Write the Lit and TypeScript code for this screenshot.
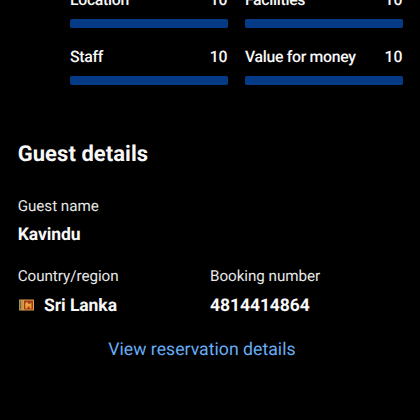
import { LitElement, html, css } from "lit";
import { customElement } from "lit/decorators.js";

const scores = [
  { label: "Location", value: 10 },
  { label: "Facilities", value: 10 },
  { label: "Staff", value: 10 },
  { label: "Value for money", value: 10 },
];

@customElement("app-root")
export class AppRoot extends LitElement {
  static styles = css`
    :host {
      display: flow-root;
      box-sizing: border-box;
      width: 420px;
      height: 420px;
      overflow: hidden;
      background: #000;
      color: #f8f8f8;
      font-family: Roboto, "Liberation Sans", sans-serif;
      white-space: nowrap;
      text-rendering: geometricPrecision;
    }
    .scores {
      display: grid;
      grid-template-columns: 157.6px 157.6px;
      column-gap: 17.4px;
      row-gap: 17px;
      margin: -12px 0 0 70px;
    }
    .line {
      display: flex;
      justify-content: space-between;
      align-items: baseline;
      font-size: 15.8px;
      font-weight: 500;
      line-height: 24px;
      letter-spacing: -0.3px;
    }
    .number {
      letter-spacing: 0;
    }
    .track {
      height: 9px;
      margin-top: 7px;
      border-radius: 2px;
      background: #1a1a1a;
    }
    .fill {
      height: 100%;
      border-radius: 2px;
      background: #053b86;
    }
    .guest {
      padding: 0 17.7px;
      margin-top: 55px;
    }
    h2 {
      margin: 0;
      font-size: 22px;
      line-height: 30px;
      font-weight: 700;
      letter-spacing: 0.05px;
    }
    .label {
      font-size: 15.2px;
      line-height: 24px;
      letter-spacing: -0.03px;
      color: #e8e8e8;
    }
    .value {
      display: flex;
      align-items: center;
      font-size: 17.5px;
      line-height: 28px;
      letter-spacing: -0.06px;
      margin-top: 3px;
      font-weight: 700;
    }
    .name {
      margin-top: 24px;
    }
    .pair {
      display: grid;
      grid-template-columns: 192.3px 1fr;
      margin-top: 15px;
    }
    .pair .value {
      margin-top: 4px;
    }
    .flag {
      width: 16px;
      height: 12px;
      margin: 0 10.3px 2px 0;
    }
    .link {
      display: block;
      margin-top: 17px;
      padding-left: 90.5px;
      font-size: 17.7px;
      line-height: 26px;
      color: #67adf5;
      text-decoration: none;
    }
  `;

  render() {
    return html`
      <section class="scores">
        ${scores.map(
          (s) => html`<div>
            <div class="line"><span>${s.label}</span><span class="number">${s.value}</span></div>
            <div class="track"><div class="fill" style="width:${s.value * 10}%"></div></div>
          </div>`
        )}
      </section>
      <section class="guest">
        <h2>Guest details</h2>
        <div class="name">
          <div class="label">Guest name</div>
          <div class="value">Kavindu</div>
        </div>
        <div class="pair">
          <div>
            <div class="label">Country/region</div>
            <div class="value">
              <svg class="flag" viewBox="0 0 16 12">
                <rect x="1" y="0.5" width="15" height="11" rx="0.6" fill="#dc9e50" />
                <rect x="1.6" y="1.5" width="1.8" height="9" fill="#4c7a48" />
                <rect x="3.4" y="1.5" width="1.8" height="9" fill="#dc8a44" />
                <rect x="6" y="1.5" width="9" height="9" fill="#a33c1c" />
                <path
                  d="M7.4 9.5V6.4L7 5.2 8 3.2H9.8L10 4.8H12.2L13.4 3.5V9.5H11.8V7.6H9.8L9.2 9.5Z"
                  fill="#eda63c"
                />
              </svg>
              <span>Sri Lanka</span>
            </div>
          </div>
          <div>
            <div class="label">Booking number</div>
            <div class="value">4814414864</div>
          </div>
        </div>
        <a class="link">View reservation details</a>
      </section>
    `;
  }
}
